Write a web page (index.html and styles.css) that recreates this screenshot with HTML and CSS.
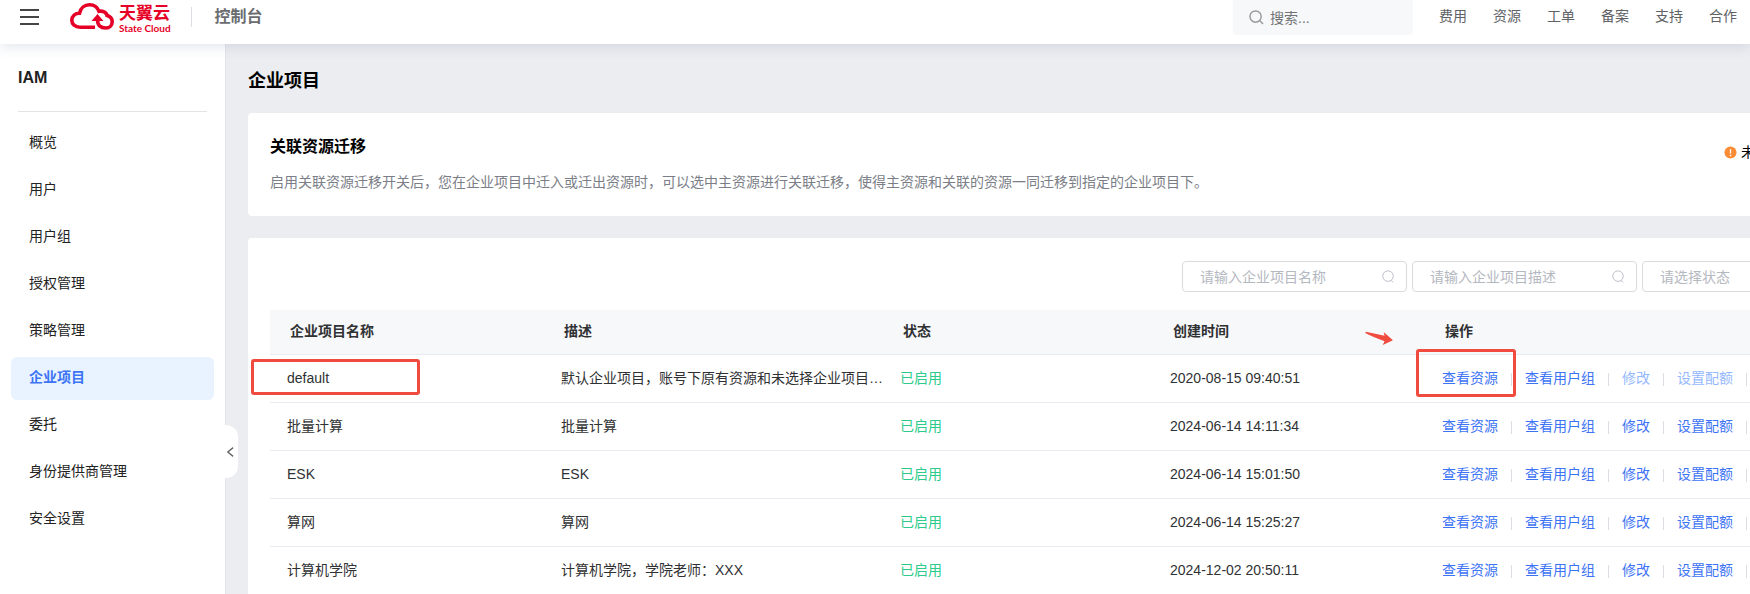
FILE: index.html
```html
<!DOCTYPE html>
<html lang="zh-CN">
<head>
  <meta charset="UTF-8">
  <meta name="viewport" content="width=device-width, initial-scale=1.0">
  <title>企业项目 - 控制台</title>
  <link rel="stylesheet" href="styles.css">
</head>
<body>
  <header class="topbar">
    <button class="menu-btn" type="button" aria-label="菜单"><span></span><span></span><span></span></button>
    <a class="logo" href="#">
      <svg class="logo-mark" viewBox="0 0 44 27" aria-hidden="true">
        <path d="M25 24.2H10C5 24.2 1.800 21.200 1.800 17.300C1.800 13.200 5 10.300 9.500 10.300C10.500 5 14.500 1.800 19.500 1.800C24 1.800 27.500 4.300 29 8.300C33.500 7.300 37.300 10 37.300 14" fill="none" stroke="#e60027" stroke-width="3.600"/>
        <path d="M36.500 12.200C40.200 13.200 42.200 15.700 42.200 18.700C42.200 22.300 39.400 25 36 25C31 25 27.500 22.500 27.500 17" fill="none" stroke="#e60027" stroke-width="3.600"/>
        <path d="M27.500 11L33.500 18H21.500Z" fill="#e60027"/>
      </svg>
      <span class="logo-text"><strong>天翼云</strong><small>State Cloud</small></span>
    </a>
    <span class="console">控制台</span>
    <label class="search">
      <svg viewBox="0 0 16 16" aria-hidden="true"><circle cx="7" cy="7" r="6"/><path d="M11.500 11.500L15 15"/></svg>
      <input type="text" placeholder="搜索..." aria-label="搜索">
    </label>
    <nav class="topnav">
      <a href="#">费用</a>
      <a href="#">资源</a>
      <a href="#">工单</a>
      <a href="#">备案</a>
      <a href="#">支持</a>
      <a href="#">合作</a>
    </nav>
  </header>

  <div class="layout">
    <aside class="sidebar">
      <h2>IAM</h2>
      <nav class="menu">
        <a href="#">概览</a>
        <a href="#">用户</a>
        <a href="#">用户组</a>
        <a href="#">授权管理</a>
        <a href="#">策略管理</a>
        <a href="#" class="active">企业项目</a>
        <a href="#">委托</a>
        <a href="#">身份提供商管理</a>
        <a href="#">安全设置</a>
      </nav>
      <button class="collapse" type="button" aria-label="收起">
        <svg viewBox="0 0 8 12" aria-hidden="true"><path d="M7 1L1 6L7 11"/></svg>
      </button>
    </aside>

    <main class="content">
      <h1>企业项目</h1>

      <section class="card migrate">
        <div>
          <h3>关联资源迁移</h3>
          <p>启用关联资源迁移开关后，您在企业项目中迁入或迁出资源时，可以选中主资源进行关联迁移，使得主资源和关联的资源一同迁移到指定的企业项目下。</p>
        </div>
        <div class="migrate-state">
          <svg viewBox="0 0 14 14" aria-hidden="true"><circle cx="7" cy="7" r="6.500" fill="#fa8c35"/><path d="M7 3.500V8M7 9.500V11" stroke="#fff" stroke-width="1.400"/></svg>
          <span>未开启关联资源迁移</span>
        </div>
      </section>

      <section class="card">
        <div class="filters">
          <label class="field">
            <input type="text" placeholder="请输入企业项目名称" aria-label="企业项目名称">
            <svg viewBox="0 0 16 16" aria-hidden="true"><circle cx="8" cy="7" r="6"/><path d="M11.500 12L14 14"/></svg>
          </label>
          <label class="field">
            <input type="text" placeholder="请输入企业项目描述" aria-label="企业项目描述">
            <svg viewBox="0 0 16 16" aria-hidden="true"><circle cx="8" cy="7" r="6"/><path d="M11.500 12L14 14"/></svg>
          </label>
          <select class="field" aria-label="状态">
            <option>请选择状态</option>
          </select>
        </div>

        <table>
          <colgroup>
            <col class="col-name"><col class="col-desc"><col class="col-status"><col class="col-time"><col>
          </colgroup>
          <thead>
            <tr>
              <th>企业项目名称</th>
              <th>描述</th>
              <th>状态</th>
              <th>创建时间</th>
              <th class="marked">操作
                <svg class="arrow" viewBox="0 0 30 14" aria-hidden="true"><path d="M0 1Q0 0 2 0L21 4L20 0L30 9L19 14L21 10Q10 6 0 1Z"/></svg>
              </th>
            </tr>
          </thead>
          <tbody>
            <tr>
              <td class="marked">default<span class="mark mark-name"></span></td>
              <td>默认企业项目，账号下原有资源和未选择企业项目…</td>
              <td class="on">已启用</td>
              <td>2020-08-15 09:40:51</td>
              <td class="marked">
                <div class="actions"><a href="#">查看资源</a><a href="#">查看用户组</a><a href="#" class="disabled">修改</a><a href="#" class="disabled">设置配额</a></div>
                <span class="mark mark-action"></span>
              </td>
            </tr>
            <tr>
              <td>批量计算</td>
              <td>批量计算</td>
              <td class="on">已启用</td>
              <td>2024-06-14 14:11:34</td>
              <td><div class="actions"><a href="#">查看资源</a><a href="#">查看用户组</a><a href="#">修改</a><a href="#">设置配额</a></div></td>
            </tr>
            <tr>
              <td>ESK</td>
              <td>ESK</td>
              <td class="on">已启用</td>
              <td>2024-06-14 15:01:50</td>
              <td><div class="actions"><a href="#">查看资源</a><a href="#">查看用户组</a><a href="#">修改</a><a href="#">设置配额</a></div></td>
            </tr>
            <tr>
              <td>算网</td>
              <td>算网</td>
              <td class="on">已启用</td>
              <td>2024-06-14 15:25:27</td>
              <td><div class="actions"><a href="#">查看资源</a><a href="#">查看用户组</a><a href="#">修改</a><a href="#">设置配额</a></div></td>
            </tr>
            <tr>
              <td>计算机学院</td>
              <td>计算机学院，学院老师：XXX</td>
              <td class="on">已启用</td>
              <td>2024-12-02 20:50:11</td>
              <td><div class="actions"><a href="#">查看资源</a><a href="#">查看用户组</a><a href="#">修改</a><a href="#">设置配额</a></div></td>
            </tr>
          </tbody>
        </table>
      </section>
    </main>
  </div>
</body>
</html>
```
FILE: styles.css
```css
* {
  box-sizing: border-box;
}

body {
  margin: 0;
  font-family: "Liberation Sans", "Noto Sans CJK SC", sans-serif;
  font-size: 14px;
  line-height: 20px;
  color: #303133;
  background: #ecedf1;
  overflow: hidden;
}

a {
  color: inherit;
  text-decoration: none;
}

h1, h2, h3, p {
  margin: 0;
}

input, select, button {
  font: inherit;
}

button {
  padding: 0;
  border: 0;
  background: none;
  cursor: pointer;
}

svg {
  display: block;
  flex: none;
}

/* top bar */
.topbar {
  position: relative;
  z-index: 2;
  display: flex;
  align-items: center;
  height: 44px;
  padding: 0 13px 11px 20px;
  background: #fff;
  box-shadow: 0 2px 14px rgba(60, 80, 130, 0.16);
}

.menu-btn {
  display: flex;
  flex-direction: column;
  gap: 5px;
  width: 19px;
}

.menu-btn span {
  height: 2px;
  background: #444;
}

.logo {
  display: flex;
  align-items: center;
  gap: 5px;
  margin-left: 31px;
  color: #e60027;
}

.logo-mark {
  width: 44px;
  height: 27px;
}

.logo-text {
  display: flex;
  flex-direction: column;
  padding-top: 4px;
}

.logo-text strong {
  font-size: 17px;
  line-height: 18px;
}

.logo-text small {
  font-family: Lato, sans-serif;
  font-size: 10px;
  font-weight: bold;
  line-height: 10px;
}

.console {
  margin-left: 20px;
  padding-left: 23px;
  border-left: 1px solid #dcdee3;
  font-size: 16px;
  font-weight: bold;
  color: #6a6c70;
}

.search {
  display: flex;
  align-items: center;
  align-self: flex-start;
  gap: 6px;
  width: 180px;
  height: 35px;
  flex: none;
  margin: 0 26px 0 auto;
  padding: 0 16px;
  border-radius: 0 0 4px 4px;
  background: #f7f8fa;
}

.search svg {
  width: 15px;
  height: 15px;
}

.search svg,
.field svg,
.collapse svg {
  fill: none;
  stroke: #999;
  stroke-width: 1.5;
}

.search input {
  width: 100%;
  min-width: 0;
  padding: 0;
  border: 0;
  background: none;
}

.search input::placeholder {
  color: #707275;
}

.topnav {
  display: flex;
  gap: 26px;
  padding-bottom: 2px;
  color: #606266;
}

/* sidebar */
.layout {
  display: flex;
  min-width: 1911px;
  min-height: calc(100vh - 44px);
}

.sidebar {
  position: relative;
  flex: none;
  width: 226px;
  border-right: 1px solid #e2e4e8;
  background: #fff;
}

.sidebar h2 {
  margin: 0 18px;
  padding: 24px 0 23px;
  border-bottom: 1px solid #e2e4e8;
  font-size: 16px;
  color: #222;
}

.menu {
  display: flex;
  flex-direction: column;
  gap: 4px;
  padding: 10px 11px;
  color: #222;
}

.menu a {
  padding: 10px 18px 13px;
  border-radius: 6px;
}

.menu .active {
  background: #e8f3ff;
  color: #3d73f5;
  font-weight: bold;
}

.collapse {
  position: absolute;
  top: 381px;
  left: 225px;
  display: flex;
  align-items: center;
  width: 13px;
  height: 53px;
  padding-left: 2px;
  border-radius: 0 12px 12px 0;
  background: #fff;
}

.collapse svg {
  width: 7px;
  height: 12px;
  stroke: #666;
}

/* content */
.content {
  flex: 1;
  padding: 24px 22px 0;
}

h1 {
  margin-bottom: 19px;
  font-size: 18px;
  line-height: 26px;
  color: #000;
}

.card {
  margin-bottom: 22px;
  padding: 22px;
  border-radius: 4px;
  background: #fff;
}

.migrate {
  display: flex;
  justify-content: space-between;
  padding-bottom: 24px;
}

.migrate h3 {
  margin-bottom: 13px;
  font-size: 16px;
  line-height: 24px;
  color: #000;
}

.migrate p {
  color: #7b7e87;
}

.migrate-state {
  display: flex;
  align-items: center;
  align-self: flex-start;
  gap: 4px;
  padding-top: 7px;
  color: #000;
}

.migrate-state svg {
  width: 13px;
  height: 13px;
}

.filters {
  display: flex;
  justify-content: flex-end;
  gap: 5px;
  margin-bottom: 18px;
  padding-top: 1px;
}

.field {
  display: flex;
  align-items: center;
  width: 225px;
  height: 31px;
  padding: 0 11px 0 17px;
  border: 1px solid #d9dbdf;
  border-radius: 4px;
  background: #fff;
  color: #b4b8c0;
}

.field input {
  flex: 1;
  min-width: 0;
  padding: 0;
  border: 0;
}

.field input::placeholder {
  color: #b4b8c0;
}

.field svg {
  width: 14px;
  height: 14px;
  stroke: #b4b8c0;
  stroke-width: 1;
}

select.field {
  appearance: none;
}

table {
  width: 100%;
  table-layout: fixed;
  border-collapse: separate;
  border-spacing: 0;
}

.col-name { width: 274px; }
.col-desc { width: 339px; }
.col-status { width: 270px; }
.col-time { width: 272px; }

th, td {
  height: 48px;
  padding: 0 0 2px 17px;
  border-bottom: 1px solid #e9ebf2;
  text-align: left;
  white-space: nowrap;
}

th {
  height: 45px;
  padding-left: 20px;
  background: #f7f8fa;
}

.on {
  color: #2dcb8b;
}

.actions {
  display: flex;
  align-items: center;
  color: #3d73f5;
}

.actions a {
  padding-right: 13px;
}

.actions a::after {
  content: "";
  display: inline-block;
  height: 13px;
  margin-left: 13px;
  border-right: 1px solid #dcdee3;
  vertical-align: -3px;
}

.actions .disabled {
  color: #94b8ff;
}

/* red highlights */
.marked {
  position: relative;
}

.mark {
  position: absolute;
  border: 3px solid #f04b3e;
  border-radius: 3px;
}

.mark-name {
  top: 4px;
  left: -19px;
  width: 169px;
  height: 36px;
}

.mark-action {
  top: -6px;
  left: -9px;
  width: 100px;
  height: 48px;
}

.arrow {
  position: absolute;
  top: 22px;
  left: -61px;
  width: 30px;
  height: 13px;
  fill: #f04b3e;
}
```
